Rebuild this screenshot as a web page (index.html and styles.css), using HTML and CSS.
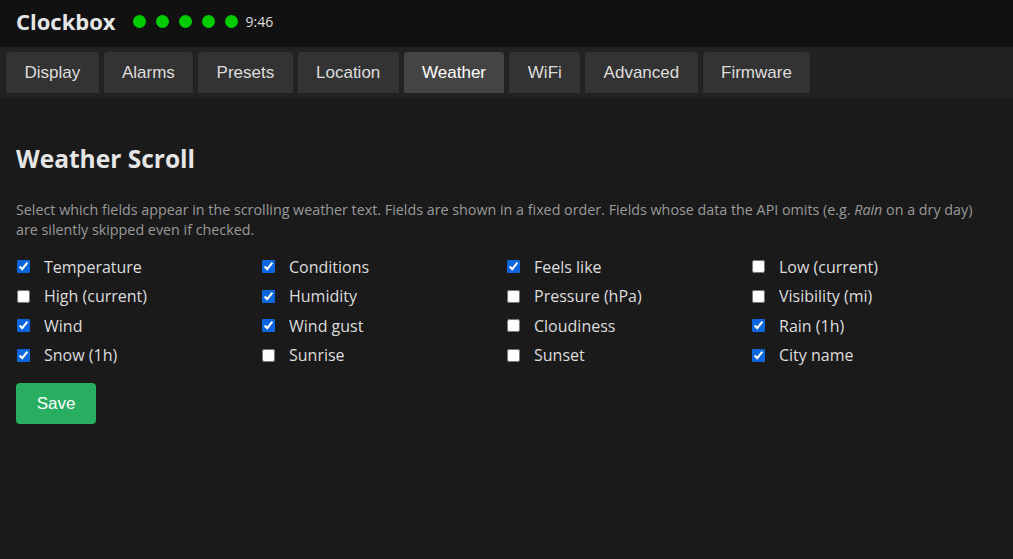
FILE: index.html
```html
<!DOCTYPE html>
<html lang="en">
<head>
  <meta charset="UTF-8">
  <meta name="viewport" content="width=device-width, initial-scale=1.0">
  <title>Clockbox</title>
  <link rel="stylesheet" href="styles.css">
</head>
<body>
  <header class="topbar">
    <div class="brand">Clockbox</div>
    <div class="dots">
      <span class="dot"></span>
      <span class="dot"></span>
      <span class="dot"></span>
      <span class="dot"></span>
      <span class="dot"></span>
    </div>
    <span class="clock">9:46</span>
  </header>

  <nav class="tabs">
    <button class="tab">Display</button>
    <button class="tab">Alarms</button>
    <button class="tab">Presets</button>
    <button class="tab">Location</button>
    <button class="tab active">Weather</button>
    <button class="tab">WiFi</button>
    <button class="tab">Advanced</button>
    <button class="tab">Firmware</button>
  </nav>

  <main class="panel">
    <h2>Weather Scroll</h2>
    <p class="hint">
      Select which fields appear in the scrolling weather text. Fields are shown in a fixed order. Fields whose data the API omits (e.g. <em>Rain</em> on a dry day) are silently skipped even if checked.
    </p>

    <div class="fields">
      <label class="field"><input type="checkbox" checked> Temperature</label>
      <label class="field"><input type="checkbox" checked> Conditions</label>
      <label class="field"><input type="checkbox" checked> Feels like</label>
      <label class="field"><input type="checkbox"> Low (current)</label>
      <label class="field"><input type="checkbox"> High (current)</label>
      <label class="field"><input type="checkbox" checked> Humidity</label>
      <label class="field"><input type="checkbox"> Pressure (hPa)</label>
      <label class="field"><input type="checkbox"> Visibility (mi)</label>
      <label class="field"><input type="checkbox" checked> Wind</label>
      <label class="field"><input type="checkbox" checked> Wind gust</label>
      <label class="field"><input type="checkbox"> Cloudiness</label>
      <label class="field"><input type="checkbox" checked> Rain (1h)</label>
      <label class="field"><input type="checkbox" checked> Snow (1h)</label>
      <label class="field"><input type="checkbox"> Sunrise</label>
      <label class="field"><input type="checkbox"> Sunset</label>
      <label class="field"><input type="checkbox" checked> City name</label>
    </div>

    <button class="save">Save</button>
  </main>
</body>
</html>
```

FILE: styles.css
```css
* {
  margin: 0;
  padding: 0;
  box-sizing: border-box;
}

html, body {
  height: 100%;
}

body {
  font-family: "Open Sans", "Noto Sans", sans-serif;
  background-color: #1a1a1a;
  color: #e0e0e0;
  display: flex;
  flex-direction: column;
}

/* Top bar */
.topbar {
  height: 47px;
  background-color: #111;
  display: flex;
  align-items: center;
  padding: 0 16px 5px;
}

.brand {
  font-size: 22px;
  font-weight: 700;
  color: #e6e6e6;
  margin-right: 17px;
}

.dots {
  display: flex;
  gap: 10px;
  margin-right: 8px;
}

.dot {
  width: 13px;
  height: 13px;
  border-radius: 50%;
  background-color: #00cc00;
}

.clock {
  font-size: 14px;
  color: #ddd;
}

/* Tabs */
.tabs {
  background-color: #222;
  display: flex;
  gap: 5px;
  padding: 5px 6px 5px;
}

.tab {
  font-family: "Liberation Sans", Arial, sans-serif;
  font-size: 17px;
  color: #ddd;
  background-color: #333;
  border: none;
  border-radius: 4px 4px 0 0;
  height: 41px;
  padding: 0 18.4px;
  cursor: pointer;
}

.tab.active {
  background-color: #444;
  color: #fff;
}

/* Panel */
.panel {
  flex: 1;
  padding: 44px 16px 16px;
}

.panel h2 {
  font-size: 24.5px;
  font-weight: 700;
  color: #e6e6e6;
  margin-bottom: 25px;
}

.hint {
  font-size: 14.3px;
  line-height: 20px;
  color: #999;
  max-width: 962px;
  margin-bottom: 12px;
}

.fields {
  display: grid;
  grid-template-columns: repeat(4, 245px);
  margin-bottom: 13px;
}

.field {
  display: flex;
  align-items: center;
  height: 29.5px;
  font-size: 16px;
  color: #ddd;
}

.field input {
  width: 13px;
  height: 13px;
  margin: 0 14px 0 1px;
  accent-color: #0a66e0;
}

.save {
  font-family: "Liberation Sans", Arial, sans-serif;
  font-size: 17px;
  color: #fff;
  background-color: #27ae60;
  border: none;
  border-radius: 4px;
  width: 80px;
  height: 41px;
  cursor: pointer;
}
```
